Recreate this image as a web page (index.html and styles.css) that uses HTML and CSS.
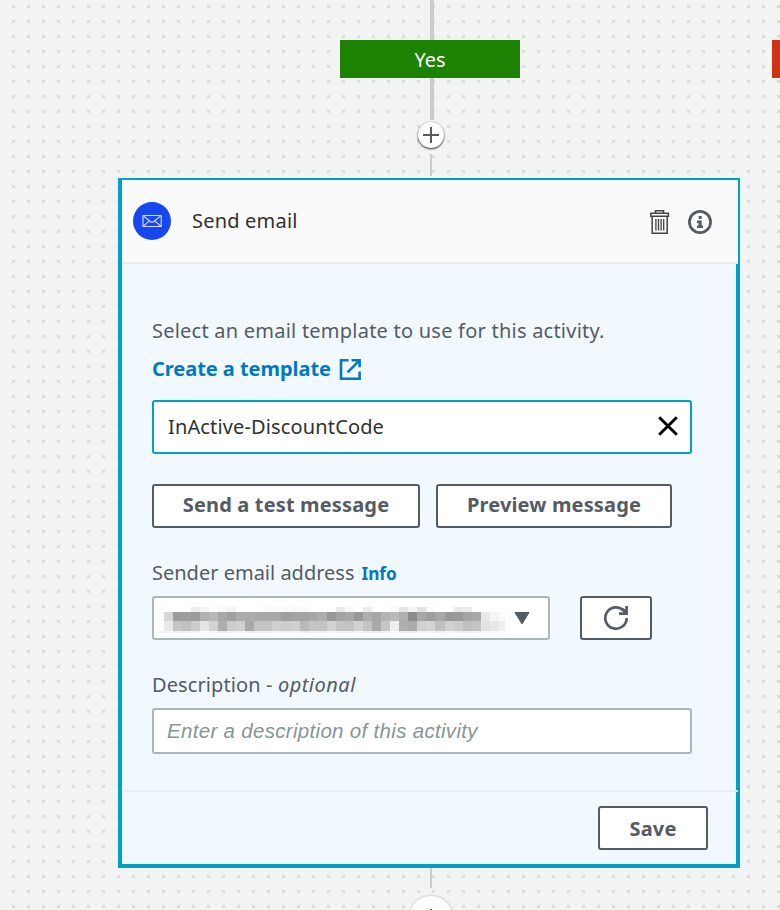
FILE: index.html
```html
<!DOCTYPE html>
<html lang="en">
<head>
<meta charset="utf-8">
<title>Journey activity</title>
<link rel="stylesheet" href="styles.css">
</head>
<body>
<main class="canvas">
  <div class="branch-row">
    <div class="stem stem-top"></div>
    <div class="branch yes"><span class="t-yes">Yes</span></div>
    <div class="stem stem-mid"></div>
    <div class="add"><svg width="16" height="16" viewBox="0 0 16 16"><path d="M8 0v16M0 8h16" stroke="#545b64" stroke-width="2"/></svg></div>
    <div class="stem stem-thin"></div>
    <div class="branch no"></div>
  </div>
  <section class="card">
    <header class="card-head">
      <svg class="mail" width="38" height="38" viewBox="0 0 38 38"><circle cx="19" cy="19" r="19" fill="#1747f0"/><g fill="none" stroke="#d5dcff" stroke-width="1.1"><path d="M10 13.5h18.2v11H10z"/><path d="M10 13.5l7.6 6.2q1.5 1.2 3 0l7.6-6.2M10 24.5l6.5-5.7M28.2 24.5l-6.5-5.7"/></g></svg>
      <h2 class="title"><span class="t-title">Send email</span></h2>
      <svg class="trash" width="20" height="24" viewBox="0 0 20 24" fill="none" stroke="#444" stroke-width="1.5"><path d="M5.5 3.3V.8h8v2.5M.8 3.3h17.6v3H.8zM2.2 6.3v16.9h15V6.3"/><path d="M5.9 9v11.5M8.5 9v11.5M11.1 9v11.5M13.7 9v11.5" stroke-width="1.3"/></svg>
      <svg class="info-icon" width="24" height="24" viewBox="0 0 24 24"><circle cx="12" cy="12" r="10.6" fill="#fafafa" stroke="#545b64" stroke-width="2.7"/><path d="M10.7 6h3v3h-3zM9 10.6h4.7v4.8H15V18H9v-2.6h1.6v-2.3H9z" fill="#545b64"/></svg>
    </header>
    <div class="card-body">
      <p class="line lead"><span class="t-lead">Select an email template to use for this activity.</span></p>
      <p class="line create"><a class="t-create">Create a template</a><svg width="23" height="23" viewBox="0 0 23 23" fill="none" stroke="#0079c0" stroke-width="2.6"><path d="M9.5 2.2H2v18.6h18.6v-7.3M12.5 2.2h8.1v7M20 2.8L8.5 14.3"/></svg></p>
      <div class="template"><span class="t-template">InActive-DiscountCode</span><svg width="20" height="20" viewBox="0 0 20 20"><path d="M1.2 1.2l17.6 17.6M18.8 1.2L1.2 18.8" stroke="#000" stroke-width="2.9"/></svg></div>
      <div class="buttons">
        <button class="btn test"><span class="t-test">Send a test message</span></button>
        <button class="btn preview"><span class="t-preview">Preview message</span></button>
      </div>
      <p class="line sender"><span class="t-sender">Sender email address</span><a class="t-info">Info</a></p>
      <div class="select-row">
        <div class="select"><svg class="redacted" width="349" height="27" viewBox="0 0 349 27" shape-rendering="crispEdges"></svg><svg class="caret" width="16" height="13" viewBox="0 0 16 13"><path d="M1 .5h14L8 12z" fill="#545b64" stroke="#545b64" stroke-linejoin="round"/></svg></div>
        <button class="btn refresh"><svg width="26" height="26" viewBox="0 0 26 26" fill="none" stroke="#545b64" stroke-width="2.7"><path d="M23.7 13A10.7 10.7 0 1 1 20.9 5.8"/><path d="M23.6 1v7.6H16"/><path d="M19.5 4l4 4" stroke-width="3"/></svg></button>
      </div>
      <p class="line desc"><span class="t-desc">Description - </span><em class="t-optional">optional</em></p>
      <div class="input"><span class="t-placeholder">Enter a description of this activity</span></div>
    </div>
    <footer class="card-foot"><button class="btn save"><span class="t-save">Save</span></button></footer>
  </section>
  <div class="stem stem-below"></div>
  <div class="add-big"><svg width="16" height="16" viewBox="0 0 16 16"><path d="M8 0v16M0 8h16" stroke="#545b64" stroke-width="2"/></svg></div>
</main>
<script src="script.js"></script>
</body>
</html>
```
FILE: styles.css
```css
* { box-sizing: border-box; }
body { margin: 0; font-family: "Noto Sans", sans-serif; font-size: 20px; color: #545b64; }
p, h2 { margin: 0; font-weight: 400; font-size: 20px; }
svg { display: block; flex: none; }
span, a, em { white-space: pre; }
.canvas {
  position: relative; width: 780px; height: 910px; overflow: hidden;
  background-color: #f2f4f4;
  background-image: conic-gradient(from 0deg at 3px 3px, transparent 75%, #dbdede 0);
  background-size: 15px 15px;
  background-position: 12px 5px;
}
.branch-row { height: 178px; display: flex; flex-direction: column; }
.stem { flex: none; width: 4px; margin-left: 430px; background: #ccc; }
.stem-top { height: 40px; }
.stem-mid { height: 42px; }
.stem-thin { width: 2px; height: 22px; margin-top: 6px; }
.stem-below { width: 2px; height: 20px; }
.branch { display: flex; align-items: center; justify-content: center; height: 38px; flex: none; }
.yes { width: 180px; margin-left: 340px; background: #1d8102; color: #fff; }
.no { position: absolute; left: 772px; top: 40px; width: 180px; background: #d13212; }
.add { flex: none; width: 26px; height: 26px; margin: 2px 0 0 418px; border-radius: 50%; background: #fff; display: grid; place-items: center; box-shadow: 0 1px 2px #000c, 0 0 1px 1px #0001; }
.card { height: 690px; width: 622px; margin-left: 118px; background: #f1f9ff; border-left: 4px solid #00a1c9; border-bottom: 4px solid #00a1c9; }
.card-head { height: 86px; background: #fafafa; border-top: 2px solid #00a1c9; border-right: 2px solid #00a1c9; display: flex; align-items: center; padding-left: 11px; box-shadow: inset 0 -2px #eaeded; }
.mail { margin-bottom: 2px; }
.title { margin: 0 0 4px 21px; flex: 1; color: #303030; letter-spacing: .2px; }
.trash { margin-right: 18px; }
.info-icon { margin-right: 26px; }
.card-body { height: 526px; border-right: 4px solid #00a1c9; padding: 51px 44px 0 30px; }
.line { height: 30px; display: flex; align-items: center; }
.t-lead { letter-spacing: .23px; }
.create { margin-top: 8px; color: #0079c0; font-weight: 700; }
.t-create { letter-spacing: -.04px; }
.create svg { margin: 3px 0 0 8px; }
.template { height: 54px; margin-top: 17px; border: 2px solid #00a1c9; border-radius: 3px; background: #fff; color: #303030; display: flex; align-items: center; justify-content: space-between; padding: 0 12px 2px 14px; }
.t-template { letter-spacing: .14px; }
.btn { height: 44px; padding: 0; border: 2px solid #545b64; border-radius: 3px; background: #fff; color: #545b64; font: 700 20px "Noto Sans", sans-serif; display: flex; align-items: center; justify-content: center; }
.buttons { display: flex; gap: 16px; margin-top: 30px; }
.test, .preview { padding-bottom: 4px; letter-spacing: .15px; }
.test { width: 268px; }
.preview { width: 236px; }
.sender { margin-top: 29px; }
.t-info { margin: 2px 0 0 7px; color: #0079c0; font-weight: 700; font-size: 17.2px; }
.select-row { display: flex; gap: 30px; margin-top: 9px; }
.select { width: 398px; height: 44px; border: 2px solid #aab7b8; border-radius: 3px; background: #fff; display: flex; align-items: center; padding-left: 2px; }
.caret { margin-left: 9px; }
.redacted { margin-top: 3px; }
.refresh { width: 72px; }
.desc { margin-top: 29px; }
.t-desc { letter-spacing: .1px; }
.t-optional { letter-spacing: .5px; }
.input { height: 46px; margin-top: 9px; border: 2px solid #aab7b8; border-radius: 3px; background: #fff; display: flex; align-items: center; padding-left: 13px; color: #879596; font: italic 20.5px "Liberation Sans", sans-serif; letter-spacing: .31px; }
.card-foot { height: 74px; border-right: 2px solid #00a1c9; display: flex; justify-content: flex-end; padding: 16px 30px 0 0; background: linear-gradient(#eaeded, #eaeded) 0 0 / 100% 2px no-repeat, linear-gradient(#00a1c9, #00a1c9) 100% 0 / 2px 100% no-repeat; }
.save { width: 110px; letter-spacing: .2px; }
.add-big { width: 44px; height: 44px; margin: 8px 0 0 409px; border-radius: 50%; background: #fff; display: grid; place-items: center; padding-bottom: 2px; box-shadow: 0 0 2px 1px #0002; }
```
FILE: script.js
```js
// Pixelated strip that hides the sender address: one grey level per block.
const rows = [
  [1, 6, "fb fe fe fe ee f3 fe f8 f4 fe fe fe fa fa fa f9 f9 fe fe fe ea f8 fe ec fe fe fa e5 f5 e3 fa fe fe ea ec fe fe fe fe"],
  [6, 15, "fb d6 9d 9e 9b b0 b8 a8 a0 ab ab a8 a8 a8 9f a3 a3 a6 ae 98 a3 a8 98 ae a6 b3 ba b0 8c a6 9e a8 98 9a a5 a9 e8 f5 fa"],
  [15, 25, "fb e8 c5 c0 cc e5 d2 ae cc d0 a8 c4 c4 cf cc d0 b9 c4 c4 d2 c3 c3 d2 c3 a8 c5 ee ae aa d0 d5 c0 d0 cc c0 c4 e3 e8 ee"],
  [25, 27, "f3 f8 f0 f0 f3 fb f5 ee f3 f4 ec f0 f0 f4 f3 f4 ed f0 f0 f5 f0 f0 f5 f0 ec f1 fb ed ed f4 f5 f0 f4 f3 f0 f1 f8 f9 fb"]
];
const strip = document.querySelector(".redacted");
for (const [top, bottom, levels] of rows) {
  levels.split(" ").forEach((level, i) => {
    const rect = document.createElementNS("http://www.w3.org/2000/svg", "rect");
    rect.setAttribute("x", i === 0 ? 0 : -1.4 + 9.06 * i);
    rect.setAttribute("y", top);
    rect.setAttribute("width", 9.3);
    rect.setAttribute("height", bottom - top);
    rect.setAttribute("fill", "#" + level.repeat(3));
    strip.append(rect);
  });
}
```
